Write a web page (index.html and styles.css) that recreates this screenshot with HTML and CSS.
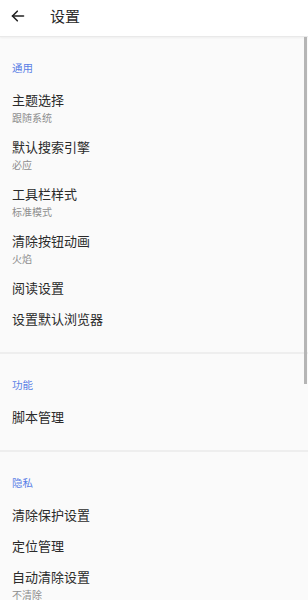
FILE: index.html
```html
<!DOCTYPE html>
<html lang="zh-CN">
<head>
<meta charset="utf-8">
<title>设置</title>
<link rel="stylesheet" href="styles.css">
</head>
<body>
<header class="appbar">
  <button class="back" aria-label="返回">
    <svg width="16" height="16" viewBox="0 0 16 16" fill="none" stroke="#222" stroke-width="1.6" stroke-linecap="round" stroke-linejoin="round">
      <path d="M13.5 8H2.5"/>
      <path d="M7.3 3.2L2.5 8l4.8 4.8"/>
    </svg>
  </button>
  <h1 class="title">设置</h1>
</header>
<main class="content">
  <section class="group">
    <div class="group-label">通用</div>
    <div class="item"><div class="item-title">主题选择</div><div class="item-sub">跟随系统</div></div>
    <div class="item"><div class="item-title">默认搜索引擎</div><div class="item-sub">必应</div></div>
    <div class="item"><div class="item-title">工具栏样式</div><div class="item-sub">标准模式</div></div>
    <div class="item"><div class="item-title">清除按钮动画</div><div class="item-sub">火焰</div></div>
    <div class="item"><div class="item-title">阅读设置</div></div>
    <div class="item"><div class="item-title">设置默认浏览器</div></div>
  </section>
  <section class="group">
    <div class="group-label">功能</div>
    <div class="item"><div class="item-title">脚本管理</div></div>
  </section>
  <section class="group">
    <div class="group-label">隐私</div>
    <div class="item"><div class="item-title">清除保护设置</div></div>
    <div class="item"><div class="item-title">定位管理</div></div>
    <div class="item"><div class="item-title">自动清除设置</div><div class="item-sub">不清除</div></div>
  </section>
</main>
<div class="scroll-thumb"></div>
</body>
</html>
```
FILE: styles.css
```css
html, body {
  margin: 0;
  padding: 0;
}
body {
  background: #fafafa;
  font-family: "Noto Sans CJK SC", "Noto Sans", sans-serif;
  color: #2a2a2a;
  height: 600px;
  overflow: hidden;
}
.appbar {
  box-sizing: border-box;
  height: 37px;
  padding-bottom: 4px;
  background: #ffffff;
  border-bottom: 1px solid #e9e9e9;
  display: flex;
  align-items: center;
  box-shadow: 0 1px 2px rgba(0,0,0,0.05);
}
.back {
  width: 16px;
  height: 16px;
  margin-left: 10px;
  padding: 0;
  border: 0;
  background: none;
  display: flex;
}
.title {
  margin: 0 0 0 24px;
  font-size: 15px;
  font-weight: 400;
  line-height: 20px;
  color: #2a2a2a;
}
.group {
  padding: 23px 0 18px;
}
.group + .group {
  border-top: 2px solid #eeeeee;
}
.group-label {
  padding: 0 12px;
  font-size: 10.5px;
  line-height: 16px;
  color: #5b7fe6;
  margin-bottom: 8px;
}
.item {
  padding: 7px 12px 6px;
}
.item-title {
  font-size: 13px;
  line-height: 18px;
  color: #2a2a2a;
}
.item-sub {
  font-size: 10px;
  line-height: 16px;
  margin-top: 1px;
  margin-bottom: -1px;
  color: #8e8e8e;
}
.scroll-thumb {
  position: absolute;
  top: 37px;
  right: 1px;
  width: 3px;
  height: 347px;
  background: #b5b5b5;
}
```
